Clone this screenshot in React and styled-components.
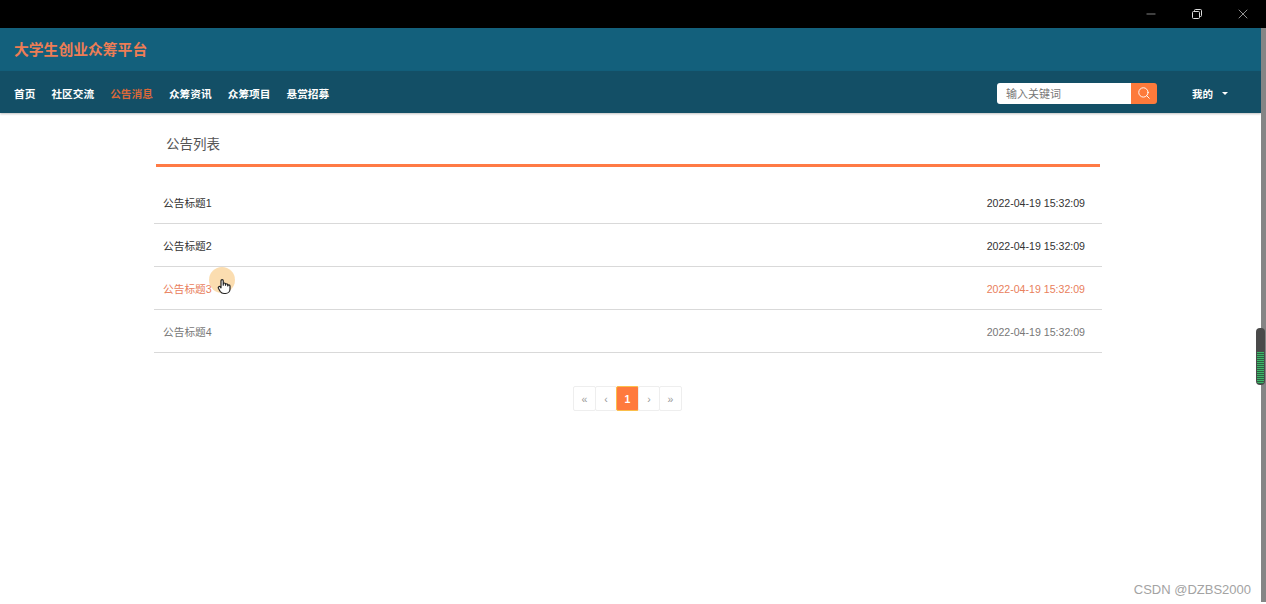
import styled, { createGlobalStyle } from 'styled-components';
import { Search, Minus, X } from 'lucide-react';

const navItems = [
  { label: '首页' },
  { label: '社区交流' },
  { label: '公告消息', active: true },
  { label: '众筹资讯' },
  { label: '众筹项目' },
  { label: '悬赏招募' },
];

const notices = [
  { title: '公告标题1', time: '2022-04-19 15:32:09' },
  { title: '公告标题2', time: '2022-04-19 15:32:09' },
  { title: '公告标题3', time: '2022-04-19 15:32:09', state: 'hover' },
  { title: '公告标题4', time: '2022-04-19 15:32:09', state: 'fading' },
];

const pages = [
  { label: '«' },
  { label: '‹' },
  { label: '1', active: true },
  { label: '›' },
  { label: '»' },
];

const noticeColors = { hover: '#e9805c', fading: '#777' };

const App = () => {
  return (
    <>
      <GlobalStyle />
      <Screen>
        <TitleBar>
          <WindowBtn>
            <Minus size={14} strokeWidth={1} />
          </WindowBtn>
          <WindowBtn>
            <svg width="12" height="12" viewBox="0 0 12 12" fill="none" stroke="#ddd" strokeWidth="1">
              <rect x="1.5" y="3.5" width="7" height="7" rx="1" />
              <path d="M3.5 3.5V2.5a1 1 0 0 1 1-1h5a1 1 0 0 1 1 1v5a1 1 0 0 1-1 1h-1" />
            </svg>
          </WindowBtn>
          <WindowBtn>
            <X size={16} strokeWidth={1} />
          </WindowBtn>
        </TitleBar>
        <Body>
          <Main>
            <BrandBar>
              <Brand>大学生创业众筹平台</Brand>
            </BrandBar>
            <NavBar>
              <NavList>
                {navItems.map((item) => (
                  <NavItem key={item.label} $active={item.active}>
                    {item.label}
                  </NavItem>
                ))}
              </NavList>
              <SearchBox>
                <SearchInput>输入关键词</SearchInput>
                <SearchBtn>
                  <Search size={14} strokeWidth={1.6} />
                </SearchBtn>
              </SearchBox>
              <UserMenu>
                我的
                <Caret />
              </UserMenu>
            </NavBar>
            <Content>
              <SectionHead>公告列表</SectionHead>
              <NoticeList>
                {notices.map((notice) => (
                  <NoticeRow key={notice.title} $state={notice.state}>
                    <NoticeTitle>{notice.title}</NoticeTitle>
                    <NoticeTime>{notice.time}</NoticeTime>
                  </NoticeRow>
                ))}
              </NoticeList>
              <Pagination>
                {pages.map((page, i) => (
                  <PageBtn key={i} $active={page.active}>
                    {page.label}
                  </PageBtn>
                ))}
              </Pagination>
            </Content>
          </Main>
          <ScrollTrack />
        </Body>
        <CursorHalo />
        <CursorHand viewBox="0 0 24 24" fill="#fff" stroke="#222" strokeWidth="1.6" strokeLinecap="round" strokeLinejoin="round">
          <path d="M8 13V5a1.5 1.5 0 0 1 3 0v6-1.5a1.5 1.5 0 0 1 3 0V11v-.5a1.5 1.5 0 0 1 3 0V12a1.5 1.5 0 0 1 3 0v4a6 6 0 0 1-6 6h-2a6 6 0 0 1-5-2.7L4.5 15a1.6 1.6 0 0 1 2.6-1.8L8 14.5z" />
        </CursorHand>
        <VolumeGauge>
          <VolumeLevel />
        </VolumeGauge>
        <Watermark>CSDN @DZBS2000</Watermark>
      </Screen>
    </>
  );
};

const GlobalStyle = createGlobalStyle`
  html, body {
    margin: 0;
    padding: 0;
    height: 100%;
    overflow: hidden;
    background-color: #fff;
  }

  body {
    font-family: "Liberation Sans", "Noto Sans CJK SC", sans-serif;
  }
`;

const Screen = styled.div`
  position: relative;
  display: flex;
  flex-direction: column;
  width: 1266px;
  height: 604px;
  overflow: hidden;
`;

const TitleBar = styled.div`
  flex: none;
  display: flex;
  justify-content: flex-end;
  height: 28px;
  background-color: #000;
`;

const WindowBtn = styled.div`
  display: flex;
  justify-content: center;
  align-items: center;
  width: 46px;
  height: 28px;
  color: #ddd;
`;

const Body = styled.div`
  flex: 1;
  display: flex;
  min-height: 0;
`;

const Main = styled.div`
  flex: 1;
  min-width: 0;
`;

const ScrollTrack = styled.div`
  flex: none;
  width: 5px;
  height: 574px;
  background-color: #858585;
`;

const BrandBar = styled.div`
  display: flex;
  align-items: center;
  height: 43px;
  padding: 0 0 3px 14px;
  box-sizing: border-box;
  background-color: #13607c;
`;

const Brand = styled.div`
  color: #ed7d55;
  font-size: 14.8px;
  font-weight: 700;
`;

const NavBar = styled.div`
  display: flex;
  align-items: center;
  height: 42px;
  padding: 2px 0 0 14px;
  box-sizing: border-box;
  background-color: #134f66;
  box-shadow: 0 1px 2px rgba(0, 0, 0, 0.25);
`;

const NavList = styled.div`
  flex: 1;
  display: flex;
  gap: 16px;
`;

const NavItem = styled.div`
  color: ${(props) => (props.$active ? '#d9683a' : '#fff')};
  font-size: 10.7px;
  font-weight: 700;
`;

const SearchBox = styled.div`
  display: flex;
  width: 160px;
  height: 21px;
  border-radius: 3px;
  overflow: hidden;
`;

const SearchInput = styled.div`
  flex: 1;
  padding-left: 9px;
  background-color: #fff;
  color: #777;
  font-size: 11px;
  line-height: 22px;
`;

const SearchBtn = styled.div`
  display: flex;
  justify-content: center;
  align-items: center;
  width: 26px;
  background-color: #fd7a3b;
  color: #fff;
`;

const UserMenu = styled.div`
  display: flex;
  align-items: center;
  gap: 9px;
  width: 69px;
  margin-left: 35px;
  color: #fff;
  font-size: 10.5px;
  font-weight: 700;
`;

const Caret = styled.span`
  width: 0;
  height: 0;
  border-top: 3px solid #fff;
  border-left: 3px solid transparent;
  border-right: 3px solid transparent;
`;

const Content = styled.div`
  width: 948px;
  margin-left: 154px;
`;

const SectionHead = styled.div`
  margin: 0 2px;
  padding: 24px 0 12px 10px;
  border-bottom: 3px solid #ff7a45;
  color: #555;
  font-size: 13.5px;
  line-height: 15px;
`;

const NoticeList = styled.div`
  margin-top: 14px;
`;

const NoticeRow = styled.div`
  display: flex;
  justify-content: space-between;
  align-items: center;
  height: 40px;
  padding: 2px 17px 0 10px;
  border-bottom: 1px solid #d9d9d9;
  color: ${(props) => noticeColors[props.$state] || '#333'};
`;

const NoticeTitle = styled.span`
  margin: -2px 0 0 -1px;
  font-size: 10.7px;
`;

const NoticeTime = styled.span`
  font-size: 10.6px;
`;

const Pagination = styled.div`
  display: flex;
  justify-content: center;
  margin: 33px 0 0 0;
`;

const PageBtn = styled.div`
  display: flex;
  justify-content: center;
  align-items: center;
  width: 22.5px;
  height: 25px;
  box-sizing: border-box;
  margin-left: -1px;
  border: 1px solid ${(props) => (props.$active ? '#fbbf4a' : '#eee')};
  border-radius: 2px;
  background-color: ${(props) => (props.$active ? '#ff7a3d' : '#fff')};
  color: ${(props) => (props.$active ? '#fff' : '#999')};
  font-size: 10.5px;
  font-weight: ${(props) => (props.$active ? 700 : 400)};
`;

const CursorHalo = styled.div`
  position: absolute;
  left: 209px;
  top: 267px;
  width: 26px;
  height: 26px;
  border-radius: 50%;
  background-color: rgba(250, 210, 150, 0.75);
`;

const CursorHand = styled.svg`
  position: absolute;
  left: 215px;
  top: 277px;
  width: 18px;
  height: 18px;
`;

const VolumeGauge = styled.div`
  position: absolute;
  left: 1256px;
  top: 328px;
  display: flex;
  align-items: flex-end;
  box-sizing: border-box;
  width: 9px;
  height: 57px;
  padding: 0 1px 1px;
  border-radius: 4px;
  background-color: #4a4a4a;
  overflow: hidden;
`;

const VolumeLevel = styled.div`
  width: 100%;
  height: 32px;
  border-radius: 0 0 3px 3px;
  background: repeating-linear-gradient(to bottom, #3cb868 0 1px, #2f5f42 1px 2px);
`;

const Watermark = styled.div`
  position: absolute;
  right: 15px;
  top: 582px;
  color: #a3a3a3;
  font-family: "Liberation Sans", sans-serif;
  font-size: 13px;
  line-height: 16px;
`;

export default App;
